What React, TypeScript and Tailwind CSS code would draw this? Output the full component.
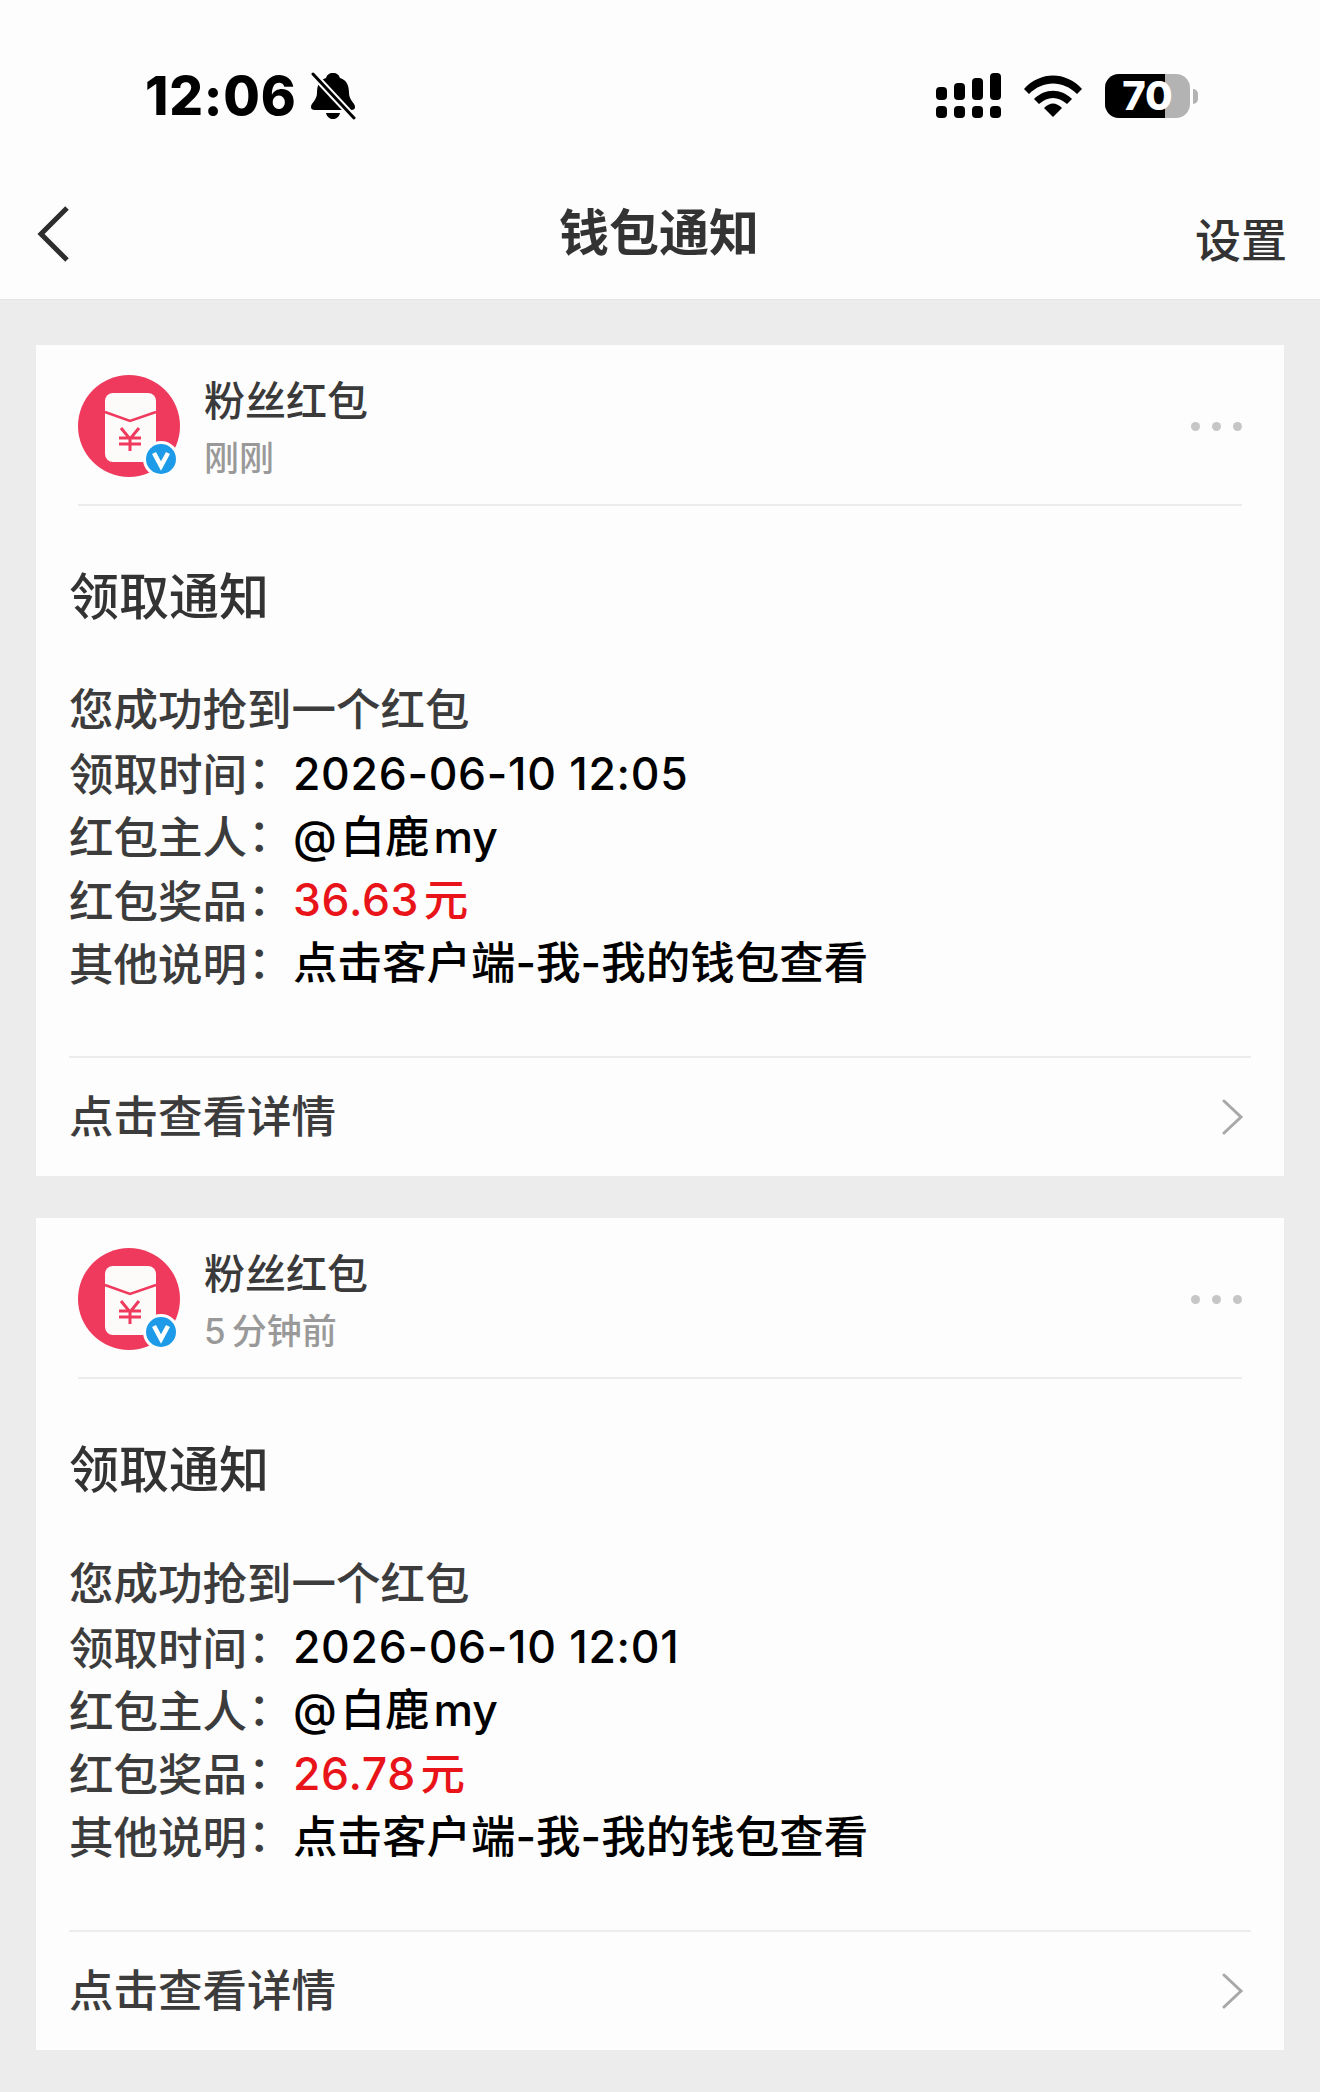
const notices = [
  { time: "刚刚", claimedAt: "2026-06-10 12:05", prize: "36.63" },
  { time: "5\u2009分钟前", claimedAt: "2026-06-10 12:01", prize: "26.78" },
];

function Avatar() {
  return (
    <svg width="104" height="104" viewBox="0 0 104 104" className="shrink-0">
      <circle cx="51" cy="51" r="51" fill="#ef3a5d" />
      <rect x="27" y="18" width="51" height="69" rx="8" fill="#fdfafa" />
      <path d="M27 37 L52 46 L78 37" fill="none" stroke="#ef3a5d" strokeWidth="2.5" />
      <path
        d="M43 53 L52 64 L61 53 M41 63 H63 M41 69 H63 M52 64 V76"
        fill="none"
        stroke="#ef3a5d"
        strokeWidth="3"
      />
      <circle cx="83" cy="84" r="18" fill="#fdfdfd" />
      <circle cx="83" cy="84" r="15" fill="#1e9be8" />
      <path d="M76 78 L83 91 L90 78" fill="none" stroke="#fff" strokeWidth="4.5" />
    </svg>
  );
}

function Row({ label, children }: { label: string; children: React.ReactNode }) {
  return (
    <div className="flex h-[63.3px] items-center">
      <div className="w-[224px] shrink-0 text-[#3c3c3c]">
        {label}
        <span className="ml-px font-['Noto_Sans_CJK_TC'] [font-feature-settings:'halt']">：</span>
      </div>
      <div className="text-black">{children}</div>
    </div>
  );
}

function NoticeCard({ time, claimedAt, prize }: { time: string; claimedAt: string; prize: string }) {
  return (
    <div className="mx-[36px] mb-[42px] bg-[#fdfdfd]">
      <div className="mx-[42px] flex h-[161px] items-start border-b-2 border-[#ececec] pt-[30px]">
        <Avatar />
        <div className="ml-[22px] flex-1">
          <div className="mt-[-3px] text-[41px] font-medium leading-[58px] text-[#3a3a3a]">粉丝红包</div>
          <div className="text-[35px] font-medium leading-[56px] text-[#999999]">{time}</div>
        </div>
        <div className="mt-[47px] flex gap-[12px]">
          <span className="h-[9px] w-[9px] rounded-full bg-[#c6c6c6]" />
          <span className="h-[9px] w-[9px] rounded-full bg-[#c6c6c6]" />
          <span className="h-[9px] w-[9px] rounded-full bg-[#c6c6c6]" />
        </div>
      </div>

      <div className="mt-[56px] pl-[33px] text-[50px] font-medium leading-[70px] text-[#333333]">领取通知</div>

      <div className="mt-[47px] pl-[33px] text-[44.5px] font-medium">
        <div className="flex h-[63.3px] items-center text-[#3c3c3c]">您成功抢到一个红包</div>
        <Row label="领取时间">
          <span className="tracking-[0.7px]">{claimedAt}</span>
        </Row>
        <Row label="红包主人">{"@\u200a白鹿\u200amy"}</Row>
        <Row label="红包奖品">
          <span className="tracking-[0.7px] text-[#e8141a]">{`${prize}\u200a元`}</span>
        </Row>
        <Row label="其他说明">点击客户端-我-我的钱包查看</Row>
      </div>

      <div className="mx-[33px] mt-[61px] flex h-[120px] items-center justify-between border-t-2 border-[#ececec] pr-[7px] text-[44.5px] font-medium text-[#3c3c3c]">
        点击查看详情
        <svg width="22" height="36" viewBox="0 0 22 36">
          <path d="M2 2 L19 18 L2 34" fill="none" stroke="#a8a8a8" strokeWidth="3" strokeLinecap="round" />
        </svg>
      </div>
    </div>
  );
}

export default function App() {
  return (
    <div className="min-h-[2092px] bg-[#ececec] font-['Inter','Noto_Sans_CJK_SC',sans-serif]">
      <div className="h-[300px] border-b border-[#e4e4e4] bg-[#fdfdfd]">
        <div className="flex h-[192px] items-center pl-[145px] pr-[122px]">
          <div className="flex flex-1 items-center gap-[13px]">
            <span className="text-[53px] font-extrabold leading-none tracking-[0.8px] text-black">12:06</span>
            <svg width="46" height="48" viewBox="0 0 46 48">
              <path
                d="M23 1 C27 1 29 3 30 6 C37 8 39 14 39 21 C39 28 45 31 45 35 C45 37 44 38 41 38 H5 C2 38 1 37 1 35 C1 31 7 28 7 21 C7 14 9 8 16 6 C17 3 19 1 23 1 Z M16 41 H30 C29 45 26 47 23 47 C20 47 17 45 16 41 Z"
                fill="#000"
              />
              <path d="M3 2 L44 46" stroke="#fdfdfd" strokeWidth="7" />
              <path d="M3 2 L44 46" stroke="#000" strokeWidth="3" strokeLinecap="round" />
            </svg>
          </div>
          <div className="flex items-center">
            <svg width="66" height="46" viewBox="0 0 66 46" fill="#000">
              <rect x="0" y="14" width="11" height="13" rx="4" />
              <rect x="18" y="10" width="11" height="17" rx="4" />
              <rect x="36" y="5" width="11" height="22" rx="4" />
              <rect x="54" y="0" width="11" height="27" rx="4" />
              <rect x="0" y="33" width="11" height="12" rx="4" />
              <rect x="18" y="33" width="11" height="12" rx="4" />
              <rect x="36" y="33" width="11" height="12" rx="4" />
              <rect x="54" y="33" width="11" height="12" rx="4" />
            </svg>
            <svg width="58" height="42" viewBox="0 0 58 42" className="ml-[22px]" fill="#000">
              <path d="M0 14 C16 -4 42 -4 58 14 L53 19 C39 5 19 5 5 19 Z" />
              <path d="M10 24 C21 13 37 13 48 24 L43 29 C34 21 24 21 15 29 Z" />
              <path d="M20 33 C26 27 32 27 38 33 L29 42 Z" />
            </svg>
            <div className="relative ml-[23px] flex h-[44px] w-[85px] items-center justify-center rounded-[14px] bg-[#b3b3b3]">
              <div className="absolute inset-y-0 left-0 w-[60px] rounded-l-[14px] bg-black" />
              <span className="relative text-[40px] font-extrabold leading-none text-white">70</span>
            </div>
            <div className="ml-[3px] h-[15px] w-[5px] rounded-r-full bg-[#b3b3b3]" />
          </div>
        </div>
        <div className="grid grid-cols-[1fr_auto_1fr] items-center pl-[37px] pr-[33px]">
          <svg width="32" height="56" viewBox="0 0 32 56">
            <path d="M30 2 L4 28 L30 54" fill="none" stroke="#2d2d2d" strokeWidth="5" />
          </svg>
          <div className="mr-[6px] text-[50px] font-bold text-[#333333]">钱包通知</div>
          <div className="mt-[14px] text-right text-[46px] font-medium text-[#333333]">设置</div>
        </div>
      </div>

      <div className="pt-[45px]">
        {notices.map((n) => (
          <NoticeCard key={n.claimedAt} {...n} />
        ))}
      </div>
    </div>
  );
}
